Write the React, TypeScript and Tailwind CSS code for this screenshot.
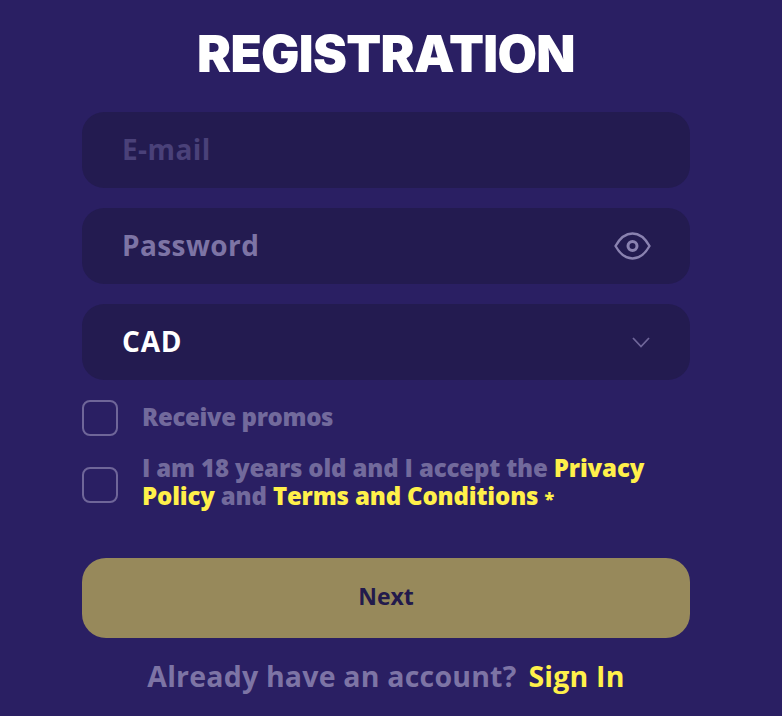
export default function App() {
  return (
    <div className="w-[782px] h-[716px] overflow-hidden bg-[#2a1f63] pl-[82px] pr-[92px] pt-[24px] font-['Open_Sans',sans-serif]">
      <h1 className="text-center text-[51px] leading-[60px] font-black text-white tracking-[-0.7px] font-['Inter',sans-serif]">REGISTRATION</h1>
      <div className="mt-[28px] flex flex-col gap-[20px]">
        <div className="h-[76px] rounded-[22px] bg-[#231b50] px-[40px] pb-[2px] flex items-center">
          <span className="text-[28px] font-bold text-[#4a4179] tracking-[0.4px]">E-mail</span>
        </div>
        <div className="h-[76px] rounded-[22px] bg-[#231b50] pl-[40px] pr-[39px] pb-[2px] flex items-center justify-between">
          <span className="text-[28px] font-bold text-[#7d74a5] tracking-[0.4px]">Password</span>
          <svg width="37" height="28" viewBox="0 0 37 28" fill="none" stroke="#8a82b0" strokeWidth="2.4" className="mt-[2px]">
            <path d="M1.5 14C6 6 12 1.5 18.5 1.5S31 6 35.5 14C31 22 25 26.5 18.5 26.5S6 22 1.5 14Z" strokeLinejoin="round" />
            <circle cx="18.5" cy="14" r="4.5" strokeWidth="3" />
          </svg>
        </div>
        <div className="h-[76px] rounded-[22px] bg-[#231b50] pl-[40px] pr-[40px] pb-[2px] flex items-center justify-between">
          <span className="text-[28px] font-bold text-white tracking-[0.8px]">CAD</span>
          <svg width="18" height="11" viewBox="0 0 18 11" fill="none" stroke="#6f6699" strokeWidth="1.8" className="mt-[2px]">
            <path d="M1 1L9 9.5L17 1" />
          </svg>
        </div>
      </div>
      <div className="mt-[20px] flex items-center gap-[24px]">
        <div className="w-[36px] h-[36px] rounded-[8px] border-2 border-[#6f6699]" />
        <span className="text-[24px] leading-[34px] pb-[2px] font-extrabold text-[#726a9c] tracking-[-0.35px]">Receive promos</span>
      </div>
      <div className="mt-[18px] flex items-center gap-[24px]">
        <div className="w-[36px] h-[36px] shrink-0 mt-[4px] rounded-[8px] border-2 border-[#6f6699]" />
        <p className="text-[24px] leading-[28px] font-extrabold text-[#726a9c] tracking-[-0.15px]">
          I am 18 years old and I accept the <span className="text-[#fff04a]">Privacy Policy</span> and{' '}
          <span className="text-[#fff04a]">Terms and Conditions</span> <span className="text-[18px] text-[#fff04a]">*</span>
        </p>
      </div>
      <button className="mt-[46px] w-full h-[80px] rounded-[24px] bg-[#97895b] pb-[4px] text-[23px] font-bold text-[#221a4c]">Next</button>
      <div className="mt-[18px] flex justify-center items-center gap-[12px] text-[28.5px] leading-[40px] font-bold tracking-[0.2px]">
        <span className="text-[#7d74a5]">Already have an account?</span>
        <span className="text-[#fff04a]">Sign In</span>
      </div>
    </div>
  );
}
